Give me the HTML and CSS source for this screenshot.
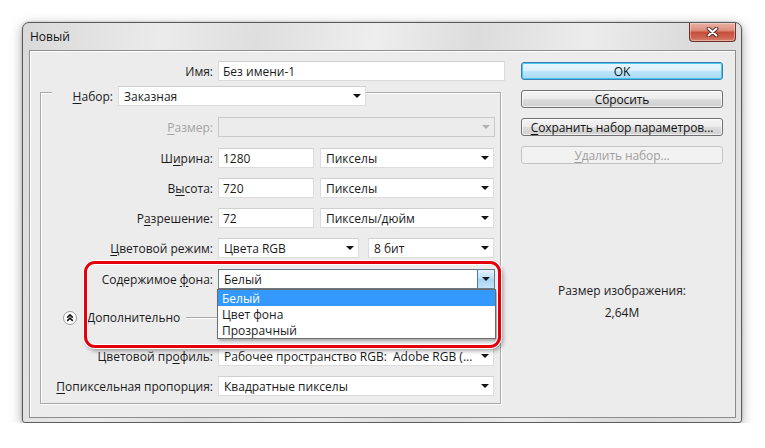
FILE: index.html
```html
<!DOCTYPE html>
<html lang="ru">
<head>
<meta charset="utf-8">
<title>Новый</title>
<link rel="stylesheet" href="styles.css">
</head>
<body>
<div class="window">
  <div class="titlebar">
    <span class="title">Новый</span>
    <div class="close">
      <svg width="13" height="10" viewBox="0 0 13 10"><path d="M2.5 1.5 L10.5 8.5 M10.5 1.5 L2.5 8.5" stroke="#4a2a24" stroke-width="3.8" stroke-linecap="round"/><path d="M2.5 1.5 L10.5 8.5 M10.5 1.5 L2.5 8.5" stroke="#fff" stroke-width="2" stroke-linecap="round"/></svg>
    </div>
  </div>
  <div class="panel">
    <div class="left">
      <div class="row name-row">
        <span class="lbl lbl-name">Имя:</span>
        <div class="field w-name">Без имени-1</div>
      </div>
      <div class="group">
        <div class="group-head">
          <span class="head-lbl"><u>Н</u>абор:</span>
          <div class="select w-preset"><span class="val">Заказная</span><i class="arrow"></i></div>
        </div>
        <div class="row r-size">
          <span class="lbl disabled"><u>Р</u>азмер:</span>
          <div class="select is-disabled w-full"><span class="val"></span><i class="arrow"></i></div>
        </div>
        <div class="row r-gap11">
          <span class="lbl">Ш<u>и</u>рина:</span>
          <div class="field w-num">1280</div>
          <div class="select w-unit"><span class="val">Пикселы</span><i class="arrow"></i></div>
        </div>
        <div class="row r-gap10">
          <span class="lbl">В<u>ы</u>сота:</span>
          <div class="field w-num">720</div>
          <div class="select w-unit"><span class="val">Пикселы</span><i class="arrow"></i></div>
        </div>
        <div class="row r-gap10">
          <span class="lbl">Р<u>а</u>зрешение:</span>
          <div class="field w-num">72</div>
          <div class="select w-unit"><span class="val">Пикселы/дюйм</span><i class="arrow"></i></div>
        </div>
        <div class="row r-gap10">
          <span class="lbl"><u>Ц</u>ветовой режим:</span>
          <div class="select w-mode"><span class="val">Цвета RGB</span><i class="arrow"></i></div>
          <div class="select w-bits"><span class="val">8 бит</span><i class="arrow"></i></div>
        </div>
        <div class="row r-gap11 r-bg">
          <span class="lbl">Содержимое <u>ф</u>она:</span>
          <div class="select is-open w-full"><span class="val">Белый</span><span class="drop-btn"><i class="arrow"></i></span></div>
          <ul class="dropdown">
            <li class="sel">Белый</li>
            <li>Цвет фона</li>
            <li>Прозрачный</li>
          </ul>
          <div class="highlight"></div>
        </div>
        <div class="row r-more">
          <span class="more-icon"><svg width="14" height="14" viewBox="0 0 14 14"><circle cx="7" cy="7" r="6.5" fill="#fff" stroke="#9a9a9a"/><path d="M4.2 6.6 L7 3.9 L9.8 6.6 M4.2 9.9 L7 7.2 L9.8 9.9" fill="none" stroke="#111" stroke-width="1.6"/></svg></span>
          <span class="more-lbl">Дополнительно</span>
          <span class="more-line"></span>
        </div>
        <div class="row r-prof">
          <span class="lbl">Цветовой пр<u>о</u>филь:</span>
          <div class="select w-full2"><span class="val">Рабочее пространство RGB:&nbsp; Adobe RGB (...</span><i class="arrow"></i></div>
        </div>
        <div class="row r-gap10">
          <span class="lbl"><u>П</u>опиксельная пропорция:</span>
          <div class="select w-full2"><span class="val">Квадратные пикселы</span><i class="arrow"></i></div>
        </div>
      </div>
    </div>
    <div class="right">
      <div class="btn btn-ok">OK</div>
      <div class="btn">Сбросить</div>
      <div class="btn"><span><u>С</u>охранить набор параметров...</span></div>
      <div class="btn btn-disabled"><span><u>У</u>далить набор...</span></div>
      <div class="info">
        <div class="info-lbl">Размер изображения:</div>
        <div class="info-val">2,64M</div>
      </div>
    </div>
  </div>
</div>
</body>
</html>
```

FILE: styles.css
```css
* { box-sizing: border-box; }
html, body { margin: 0; background: #fff; }
body {
  font-family: "Open Sans", "Noto Sans", "DejaVu Sans", sans-serif;
  font-size: 12px;
  color: #1b1b1b;
}
u { text-decoration: underline; text-underline-offset: 2px; }

.window {
  margin: 22px 0 0 22px;
  width: 720px;
  height: 401px;
  border: 1px solid #5b5b5b;
  border-radius: 7px 7px 3px 3px;
  background: linear-gradient(100deg, #d9d9d9 0%, #ebebeb 18%, #dedede 30%, #eeeeee 45%, #dcdcdc 58%, #ececec 72%, #dadada 86%, #e4e4e4 100%);
  box-shadow: 0 3px 12px rgba(0,0,0,.35), 0 0 2px rgba(0,0,0,.25);
  display: flex;
  flex-direction: column;
}

.titlebar {
  height: 27px;
  flex: none;
  display: flex;
  align-items: flex-start;
  justify-content: space-between;
}
.title {
  padding: 6px 0 0 7px;
  line-height: 16px;
  color: #111;
}
.close {
  width: 47px;
  height: 19px;
  margin-right: 5px;
  border: 1px solid #6f3128;
  border-top: none;
  border-radius: 0 0 4px 4px;
  background: linear-gradient(#e8b0a4 0%, #df907f 40%, #c74f3a 52%, #cd6350 80%, #d98272 100%);
  box-shadow: inset 0 0 0 1px rgba(255,255,255,.35);
  display: flex;
  align-items: center;
  justify-content: center;
}

.panel {
  flex: 1;
  margin: 0 5px 4px 6px;
  border: 1px solid #8d8d8d;
  box-shadow: inset 1px 1px 0 #fff;
  background: #ececec;
  display: flex;
}

.left {
  width: 491px;
  flex: none;
  padding: 10px 0 0 0;
}

.row {
  display: flex;
  align-items: center;
  height: 20px;
  position: relative;
}
.lbl {
  width: 172px;
  margin-right: 5px;
  text-align: right;
  white-space: nowrap;
  line-height: 20px;
  padding-top: 1px;
  flex: none;
}
.lbl-name { width: 183px; }
.disabled { color: #a3a3a3; }

.field, .select {
  height: 20px;
  flex: none;
  background: #fff;
  border: 1px solid #dcdcdc;
  border-top-color: #cfcfcf;
  line-height: 18px;
  white-space: nowrap;
  overflow: hidden;
}
.field { padding: 1px 0 0 4px; }
.select {
  display: flex;
  align-items: center;
  padding: 0 4px 0 5px;
}
.select .val { flex: 1; overflow: hidden; padding-top: 1px; }
.arrow {
  width: 0;
  height: 0;
  border-left: 4px solid transparent;
  border-right: 4px solid transparent;
  border-top: 4px solid #111;
  flex: none;
}

.w-name { width: 287px; }
.w-preset { width: 248px; }
.w-full { width: 277px; }
.w-full2 { width: 276px; }
.w-num { width: 96px; margin-right: 6px; }
.w-unit { width: 174px; }
.w-mode { width: 141px; margin-right: 9px; }
.w-bits { width: 126px; }

.select.is-disabled {
  background: #ececec;
  border-color: #c9c9c9;
}
.select.is-disabled .arrow { border-top-color: #b0b0b0; }

.select.is-open {
  border-color: #6b7a86;
  padding-right: 0;
}
.drop-btn {
  width: 17px;
  height: 18px;
  border-left: 1px solid #3c7fb1;
  background: linear-gradient(#e4f3fc, #bcdff5 50%, #a7d4f1 51%, #c2e3f7);
  display: flex;
  align-items: center;
  justify-content: center;
}
.drop-btn .arrow { border-top-color: #0f1f2a; }

.group {
  margin: 11px 0 0 10px;
  width: 461px;
  height: 312px;
  border: 1px solid #a9a9a9;
  box-shadow: 1px 1px 0 #fff, inset 1px 1px 0 #fff;
  padding-bottom: 7px;
}
.group-head {
  display: flex;
  align-items: center;
  margin: -7px 0 0 11px;
  height: 20px;
}
.head-lbl {
  width: 66px;
  padding: 1px 5px 0 0;
  text-align: right;
  background: #ececec;
  line-height: 19px;
  height: 20px;
}

.r-size { margin-top: 11px; }
.r-gap10 { margin-top: 10px; }
.r-gap11 { margin-top: 11px; }
.r-bg { z-index: 2; }
.r-more { margin-top: 19px; }
.r-prof { margin-top: 18px; }

.dropdown {
  position: absolute;
  left: 176px;
  top: 20px;
  width: 279px;
  margin: 0;
  padding: 0;
  list-style: none;
  background: #fff;
  border: 1px solid #6c6c6c;
  box-shadow: 2px 2px 3px rgba(0,0,0,.3);
}
.dropdown li {
  height: 16px;
  line-height: 17px;
  padding-left: 4px;
}
.dropdown li.sel {
  background: #3399ff;
  color: #fff;
}

.highlight {
  position: absolute;
  left: 43px;
  top: -8px;
  width: 417px;
  height: 87px;
  border: 3px solid #e4000a;
  border-radius: 11px;
  box-shadow: 0 0 0 1px #fff, inset 0 0 0 1px #fff, 2px 3px 4px rgba(0,0,0,.35);
  pointer-events: none;
}

.more-icon {
  width: 14px;
  height: 14px;
  margin-left: 22px;
  display: flex;
}
.more-lbl {
  margin-left: 10px;
  line-height: 20px;
}
.more-line {
  width: 50px;
  margin-left: 6px;
  height: 2px;
  border-top: 1px solid #a9a9a9;
  border-bottom: 1px solid #fff;
}

.right {
  width: 202px;
  flex: none;
  padding-top: 11px;
  display: flex;
  flex-direction: column;
}
.btn {
  height: 18px;
  margin-bottom: 10px;
  border: 1px solid #707070;
  border-radius: 3px;
  background: linear-gradient(#f4f4f4 0%, #ebebeb 50%, #dddddd 51%, #cfcfcf 100%);
  box-shadow: inset 0 0 0 1px rgba(255,255,255,.7);
  text-align: center;
  line-height: 17px;
  color: #111;
  white-space: nowrap;
  letter-spacing: -0.1px;
}
.btn-ok {
  border-color: #3c7fb1;
  background: linear-gradient(#eaf6fd 0%, #d9f0fc 50%, #bee6fd 51%, #a7d9f5 100%);
  box-shadow: inset 0 0 0 1px #48c4f0;
}
.btn-disabled {
  border-color: #c2c2c2;
  background: #f2f2f2;
  color: #a0a0a0;
  box-shadow: none;
}

.info {
  margin-top: 109px;
  text-align: center;
  line-height: 16px;
}
.info-val { margin-top: 6px; }
```
